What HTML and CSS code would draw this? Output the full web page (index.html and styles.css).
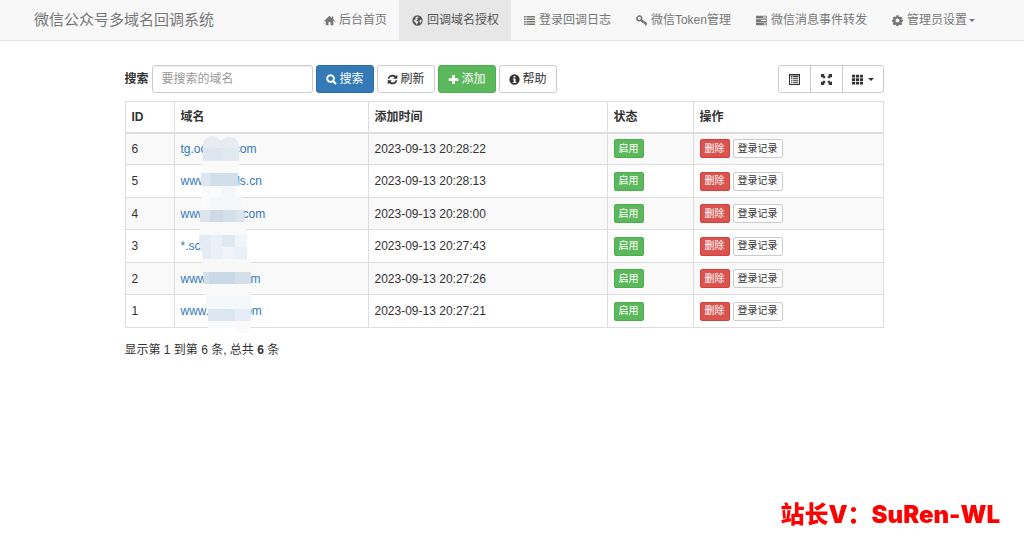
FILE: index.html
```html
<!DOCTYPE html>
<html lang="zh-CN">
<head>
    <meta charset="UTF-8">
    <meta name="viewport" content="width=device-width, initial-scale=1.0">
    <title>回调域名授权</title>
    <link rel="stylesheet" href="styles.css">
</head>
<body>
    <!-- icon set -->
    <svg class="sprite" aria-hidden="true">
        <symbol id="home" viewBox="0 0 16 16"><path d="M8 1L0 8.600l1 1L2.500 8.300V15H6.500V10h3v5h4V8.300l1.500 1.300 1-1L13.500 6V2h-2v2.200z"/></symbol>
        <symbol id="globe" viewBox="0 0 16 16"><path fill-rule="evenodd" d="M8 .5a7.500 7.500 0 1 0 0 15 7.500 7.500 0 0 0 0-15zM5.500 2.800L8.500 2l1 1.500L7.500 5l1 1.500L6 8l2.500 1 .5 2-2.500 3L5 11 2.500 8.500l.5-1 2-1.500zM11.500 7l2.500 0-.5 3-1.500 1.500-1.500-2z"/></symbol>
        <symbol id="list" viewBox="0 0 16 16"><path d="M0 1.500h2.500v2.200H0zM3.500 1.500H16v2.200H3.500zM0 5.100h2.500v2.200H0zM3.500 5.100H16v2.200H3.500zM0 8.700h2.500v2.200H0zM3.500 8.700H16v2.200H3.500zM0 12.300h2.500v2.200H0zM3.500 12.300H16v2.200H3.500z"/></symbol>
        <symbol id="key" viewBox="0 0 16 16"><path fill-rule="evenodd" d="M1.500 2C3.700-.3 7.800 0 9 3c.6 1.300.4 2.500 0 3.400l6.800 4.800.2 2-1.400 2.300-1.700-.5.2-2-1.700.3-.4-2-1.700.3L7 9C4.500 10.500 1 9.200.3 6.300 0 4.500.4 3.100 1.500 2zM3.500 3.300C1.900 4.800 2.700 7.200 4.700 7.200 6.800 7.200 8 4.700 6.400 3.300 5.500 2.500 4.300 2.500 3.500 3.300z"/></symbol>
        <symbol id="tasks" viewBox="0 0 16 16"><path fill-rule="evenodd" d="M0 1h16v4H0zM10 2.300v1.400h5V2.300zM0 6h16v4H0zM7 7.300v1.400h8V7.300zM0 11h16v4H0zM11 12.300v1.400h4v-1.400z"/></symbol>
        <symbol id="cog" viewBox="0 0 16 16"><path fill-rule="evenodd" d="M6.500.5h3l.5 2 1.300.5L13 2l2 2-1 1.800.5 1.200 1.500.4v2.200l-1.700.5-.5 1.300L15 13l-2 2-1.700-1-1.300.5-.5 1.500h-3L6 14.500 4.700 14 3 15l-2-2 1-1.700-.5-1.200L0 9.600V7.400L1.500 7 2 5.800 1 4l2-2 1.700 1L6 2.500zM8 5.200a2.900 2.900 0 1 0 0 5.800 2.900 2.900 0 0 0 0-5.800z"/></symbol>
        <symbol id="search" viewBox="0 0 16 16"><path fill-rule="evenodd" d="M6.700.5a6.200 6.200 0 1 0 3.200 11.400l3.600 3.700 2.200-2.200-3.700-3.700A6.200 6.200 0 0 0 6.700.5zM6.700 3.100a3.600 3.600 0 1 1 0 7.200 3.600 3.600 0 0 1 0-7.200z"/></symbol>
        <symbol id="refresh" viewBox="0 0 16 16"><path d="M8 1c2 0 3.700.8 5 2l2-2v6H9l2-2C8.500 2.700 4.500 3.500 3.300 7H1c.6-3.500 3.500-6 7-6zM1 9h6l-2 2c2.500 2.300 6.500 1.500 7.700-2H15c-.6 3.500-3.500 6-7 6-2 0-3.700-.8-5-2l-2 2z"/></symbol>
        <symbol id="plus" viewBox="0 0 16 16"><path d="M6 1.500h4V6h5v4h-5v4.500H6V10H1V6h5z"/></symbol>
        <symbol id="info" viewBox="0 0 16 16"><path fill-rule="evenodd" d="M8 .5a7.500 7.500 0 1 0 0 15 7.500 7.500 0 0 0 0-15zM6.700 3h2.600v2.200H6.700zM5.500 6.500h4v5h1.300V13H5.500v-1.500h1.300V8H5.500z"/></symbol>
        <symbol id="list-alt" viewBox="0 0 16 16"><path fill-rule="evenodd" d="M0 0h16v16H0zM1.500 2v12.500h13V2zM3 3h2v2H3zM6 3h7.500v1.700H6zM3 6h2v1.700H3zM6 6h7.500v1.700H6zM3 9h2v1.700H3zM6 9h7.500v1.700H6zM3 12h2v1.500H3zM6 12h7.500v1.500H6z"/></symbol>
        <symbol id="fullscreen" viewBox="0 0 16 16"><path d="M0 0h5.500L4 1.600l2.800 2.700-2.500 2.500L1.600 4 0 5.500zM16 0v5.500L14.400 4l-2.700 2.800-2.500-2.500L12 1.600 10.500 0zM0 16v-5.500L1.600 12l2.700-2.800 2.500 2.500L4 14.400 5.500 16zM16 16h-5.500l1.500-1.600-2.800-2.700 2.500-2.500 2.700 2.800 1.600-1.500z"/></symbol>
        <symbol id="th" viewBox="0 0 16 16"><path d="M0 1h4.500v4H0zM5.700 1h4.600v4H5.700zM11.500 1H16v4h-4.500zM0 6.200h4.500v4H0zM5.700 6.200h4.600v4H5.700zM11.500 6.200H16v4h-4.500zM0 11.400h4.500v4H0zM5.700 11.400h4.600v4H5.700zM11.500 11.400H16v4h-4.500z"/></symbol>
    </svg>

    <header class="navbar">
        <a class="brand" href="#">微信公众号多域名回调系统</a>
        <nav class="nav">
            <a href="#"><svg class="icon"><use href="#home"/></svg>后台首页</a>
            <a href="#" class="active"><svg class="icon"><use href="#globe"/></svg>回调域名授权</a>
            <a href="#"><svg class="icon"><use href="#list"/></svg>登录回调日志</a>
            <a href="#"><svg class="icon"><use href="#key"/></svg>微信Token管理</a>
            <a href="#"><svg class="icon"><use href="#tasks"/></svg>微信消息事件转发</a>
            <a href="#"><svg class="icon"><use href="#cog"/></svg>管理员设置<span class="caret"></span></a>
        </nav>
    </header>

    <main class="container">
        <div class="toolbar">
            <form class="search-form">
                <label for="kw">搜索</label>
                <input type="text" id="kw" placeholder="要搜索的域名">
                <button type="submit" class="btn primary"><svg class="icon"><use href="#search"/></svg>搜索</button>
                <button type="button" class="btn"><svg class="icon"><use href="#refresh"/></svg>刷新</button>
                <button type="button" class="btn success"><svg class="icon"><use href="#plus"/></svg>添加</button>
                <button type="button" class="btn"><svg class="icon"><use href="#info"/></svg>帮助</button>
            </form>
            <div class="btn-group">
                <button type="button" class="btn" aria-label="切换视图"><svg class="icon"><use href="#list-alt"/></svg></button>
                <button type="button" class="btn" aria-label="全屏"><svg class="icon"><use href="#fullscreen"/></svg></button>
                <button type="button" class="btn" aria-label="列"><svg class="icon"><use href="#th"/></svg><span class="caret"></span></button>
            </div>
        </div>

        <div class="table-box">
            <table>
                <thead>
                    <tr><th class="col-id">ID</th><th class="col-domain">域名</th><th class="col-time">添加时间</th><th class="col-status">状态</th><th>操作</th></tr>
                </thead>
                <tbody>
                    <tr>
                        <td>6</td>
                        <td><a href="#">tg.ocxxxx.com</a></td>
                        <td>2023-09-13 20:28:22</td>
                        <td><button class="btn-xs success">启用</button></td>
                        <td><div class="actions"><button class="btn-xs danger">删除</button><button class="btn-xs">登录记录</button></div></td>
                    </tr>
                    <tr>
                        <td>5</td>
                        <td><a href="#">www.xxxxds.cn</a></td>
                        <td>2023-09-13 20:28:13</td>
                        <td><button class="btn-xs success">启用</button></td>
                        <td><div class="actions"><button class="btn-xs danger">删除</button><button class="btn-xs">登录记录</button></div></td>
                    </tr>
                    <tr>
                        <td>4</td>
                        <td><a href="#">www.xxxxx.com</a></td>
                        <td>2023-09-13 20:28:00</td>
                        <td><button class="btn-xs success">启用</button></td>
                        <td><div class="actions"><button class="btn-xs danger">删除</button><button class="btn-xs">登录记录</button></div></td>
                    </tr>
                    <tr>
                        <td>3</td>
                        <td><a href="#">*.scxx.cn</a></td>
                        <td>2023-09-13 20:27:43</td>
                        <td><button class="btn-xs success">启用</button></td>
                        <td><div class="actions"><button class="btn-xs danger">删除</button><button class="btn-xs">登录记录</button></div></td>
                    </tr>
                    <tr>
                        <td>2</td>
                        <td><a href="#">www.xxoo.com</a></td>
                        <td>2023-09-13 20:27:26</td>
                        <td><button class="btn-xs success">启用</button></td>
                        <td><div class="actions"><button class="btn-xs danger">删除</button><button class="btn-xs">登录记录</button></div></td>
                    </tr>
                    <tr>
                        <td>1</td>
                        <td><a href="#">www.oooo.com</a></td>
                        <td>2023-09-13 20:27:21</td>
                        <td><button class="btn-xs success">启用</button></td>
                        <td><div class="actions"><button class="btn-xs danger">删除</button><button class="btn-xs">登录记录</button></div></td>
                    </tr>
                </tbody>
            </table>

            <!-- mosaic over the middle of the domains -->
            <svg class="mosaic" viewBox="199 135 54 199" aria-hidden="true">
                <path fill="#e6ecf2" d="M203 161V145c0-5 4-9 9-9 4 0 6 2 9 5 3-3 5-4 9-4 5 0 9 4 9 9v15z"/>
                <path fill="#dde6ee" d="M203 148h18v12h-18z"/><path fill="#e0e8f0" d="M221 148h18v12h-18z"/>
                <path fill="#fafafb" d="M202 161h37v12h-37z"/>
                <path fill="#dce7f1" d="M201 173h9v13h-9z"/><path fill="#cfdfec" d="M210 173h28l1 13h-29z"/>
                <path fill="#fbfbfc" d="M202 186h38l3 24h-42z"/><path fill="#f3f6fa" d="M222 186h13v11h-13z"/><path fill="#f6f7f9" d="M210 197h31l2 13h-33z"/>
                <path fill="#dce5ee" d="M200 210h44l1 12h-45z"/><path fill="#cddbe7" d="M210 210h13v12h-13z"/><path fill="#d3dfeb" d="M223 210h12v12h-12z"/>
                <path fill="#f9f9f9" d="M200 222h45l2 13h-48z"/>
                <path fill="#e3ecf5" d="M199 235h12v12h-12zM201 247h10v12h-8z"/><path fill="#e9f0f9" d="M211 235h11v12h-11z"/><path fill="#dfe9f2" d="M222 235h13v12h-13z"/><path fill="#eff5f8" d="M235 235h12v12h-12z"/>
                <path fill="#eaf0f7" d="M211 247h11v12h-11zM235 247h12v12h-12z"/><path fill="#f0f4fa" d="M222 247h13v12h-13z"/>
                <path fill="#f8f8f8" d="M202 259h48l1 13h-48z"/>
                <path fill="#d3dfe9" d="M203 272h6v12h-5z"/><path fill="#c9d9e6" d="M209 272h26v12h-26z"/><path fill="#d5dfea" d="M235 272h16v12h-16z"/>
                <path fill="#fafafa" d="M204 284h47v12h-46zM208 321h43v7l-5 5h-5l-6-5h-27z"/>
                <path fill="#f5f8fb" d="M206 296h45v13h-45z"/><path fill="#dbe6f0" d="M208 309h27v12h-27z"/><path fill="#e6edf7" d="M235 309h16v12h-16z"/>
            </svg>
        </div>

        <p class="summary">显示第 1 到第 6 条, 总共 <b>6</b> 条</p>
    </main>

    <div class="contact">站长V：SuRen-WL</div>
</body>
</html>
```
FILE: styles.css
```css
* {
    box-sizing: border-box;
}

body {
    margin: 0;
    font-family: "Liberation Sans", "Noto Sans CJK SC", sans-serif;
    font-size: 12px;
    line-height: 16px;
    color: #333;
    background-color: #fff;
}

a {
    color: #337ab7;
    text-decoration: none;
}

.sprite {
    display: none;
}

.icon {
    width: 11px;
    height: 11px;
    fill: currentColor;
    flex: none;
}

.caret {
    border-top: 3px solid;
    border-left: 3px solid transparent;
    border-right: 3px solid transparent;
}

/* navbar */
.navbar {
    display: flex;
    justify-content: space-between;
    padding: 0 37px 0 34px;
    background-color: #f8f8f8;
    border-bottom: 1px solid #e7e7e7;
}

.brand {
    padding: 10px 0;
    font-size: 15px;
    line-height: 20px;
    color: #777;
}

.nav {
    display: flex;
}

.nav a {
    display: flex;
    align-items: center;
    gap: 4px;
    padding: 12px 12px 12px 13px;
    color: #777;
}

.nav .active {
    color: #555;
    background-color: #e7e7e7;
}

.nav .caret {
    margin-left: -2px;
}

/* content */
.container {
    width: 759px;
    max-width: 100%;
    margin: 24px auto 0;
    position: relative;
    right: 8px;
}

.toolbar,
.search-form,
.btn-group,
.actions {
    display: flex;
    align-items: center;
}

.toolbar {
    justify-content: space-between;
    margin-bottom: 8px;
}

.search-form,
.actions {
    gap: 3px;
}

label {
    font-weight: bold;
}

input {
    width: 161px;
    height: 28px;
    padding: 0 9px;
    font: inherit;
    border: 1px solid #ccc;
    border-radius: 3px;
    box-shadow: inset 0 1px 1px rgba(0, 0, 0, 0.075);
}

input::placeholder {
    color: #999;
}

button {
    font-family: inherit;
    color: #333;
    background-color: #fff;
    border: 1px solid #ccc;
    border-radius: 3px;
}

.btn {
    display: flex;
    align-items: center;
    gap: 3px;
    height: 28px;
    padding: 0 9px;
    font-size: 12px;
    line-height: 16px;
}

.btn-xs {
    display: block;
    height: 19px;
    padding: 0 4px;
    font-size: 10px;
    line-height: 16px;
    border-radius: 2px;
}

.primary {
    color: #fff;
    background-color: #337ab7;
    border-color: #2e6da4;
}

.success {
    color: #fff;
    background-color: #5cb85c;
    border-color: #4cae4c;
}

.danger {
    color: #fff;
    background-color: #d9534f;
    border-color: #d43f3a;
}

.btn-group .btn {
    padding: 0 10px;
    border-radius: 0;
}

.btn-group .btn + .btn {
    margin-left: -1px;
}

.btn-group .btn:first-child {
    border-radius: 3px 0 0 3px;
}

.btn-group .btn:last-child {
    gap: 5px;
    padding: 0 9px;
    border-radius: 0 3px 3px 0;
}

/* domain table */
.table-box {
    position: relative;
}

table {
    width: 100%;
    table-layout: fixed;
    border-collapse: collapse;
}

th,
td {
    padding: 0 6px;
    text-align: left;
    border: 1px solid #ddd;
}

th {
    height: 31px;
    border-bottom-width: 2px;
}

td {
    height: 32px;
}

tbody tr:nth-child(even) td {
    height: 33px;
}

tbody tr:nth-child(odd) {
    background-color: #f9f9f9;
}

.col-id {
    width: 49px;
}

.col-domain {
    width: 194px;
}

.col-time {
    width: 239px;
}

.col-status {
    width: 86px;
}

.mosaic {
    position: absolute;
    left: 74px;
    top: 34px;
    width: 54px;
    height: 199px;
}

.summary {
    margin: 14px 0 0;
}

.contact {
    position: fixed;
    right: 24px;
    bottom: 18px;
    font-family: Inter, "Noto Sans CJK SC", sans-serif;
    font-size: 24px;
    font-weight: 900;
    line-height: 30px;
    color: #f00;
}
```
